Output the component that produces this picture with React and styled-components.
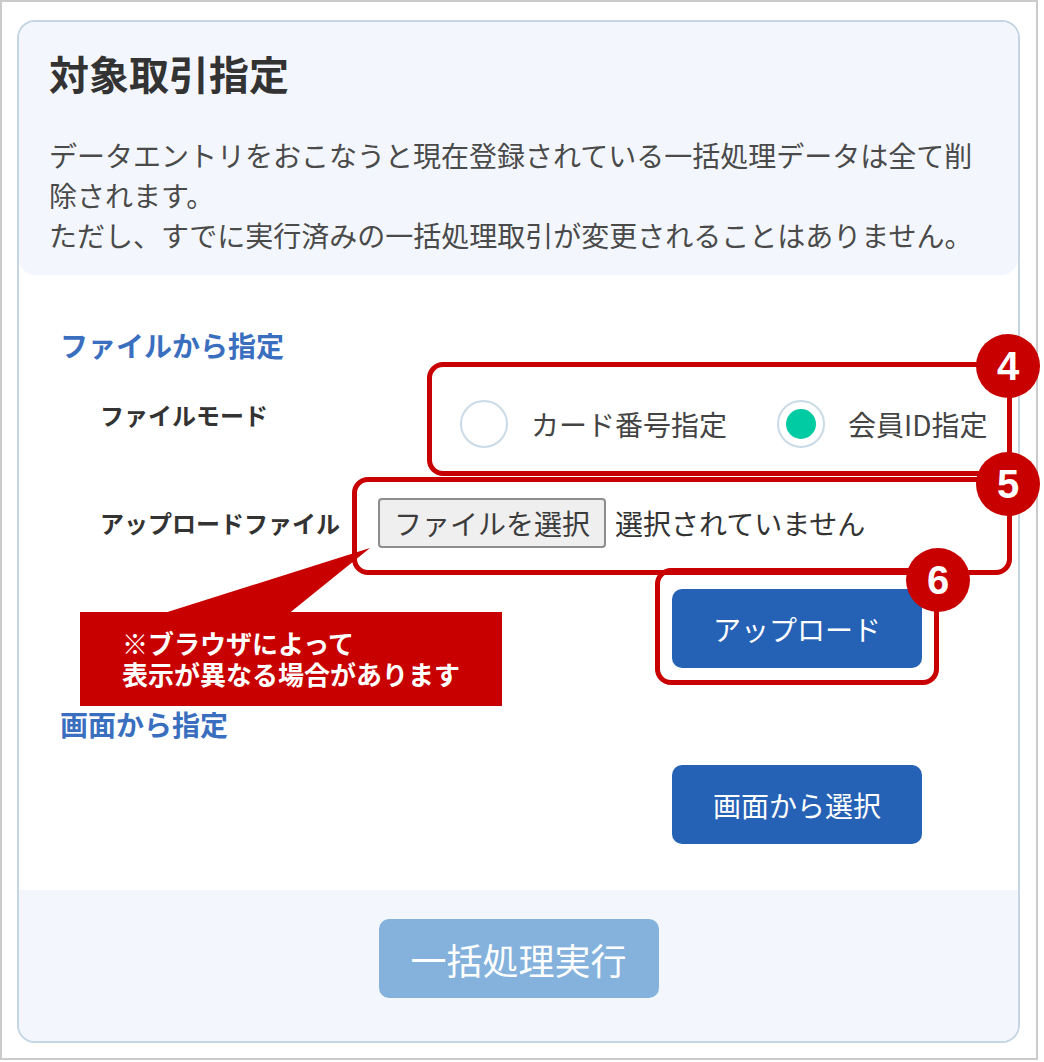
import React from 'react';
import styled, { createGlobalStyle } from 'styled-components';

const GlobalStyle = createGlobalStyle`
  html, body {
    margin: 0;
    padding: 0;
    background: #fff;
  }
  body {
    font-family: "Noto Sans CJK JP", "Noto Sans", sans-serif;
  }
`;

const RED = '#c80000';

const Frame = styled.div`
  position: relative;
  box-sizing: border-box;
  width: 1038px;
  height: 1060px;
  border: 2px solid #cbcbcb;
  padding: 18px 0 0 15px;
`;

const Card = styled.section`
  box-sizing: border-box;
  width: 1003px;
  border: 2px solid #c4d6e3;
  border-radius: 18px;
  overflow: hidden;
  background: #fff;
  display: flex;
  flex-direction: column;
`;

const Header = styled.header`
  background: #f3f7fd;
  border-radius: 0 0 16px 16px;
  padding: 31px 30px 20px 30px;
`;

const Title = styled.h2`
  margin: 0;
  font-size: 40px;
  line-height: 40px;
  font-weight: 700;
  color: #333;
`;

const Lead = styled.p`
  margin: 42px 0 0;
  font-size: 28px;
  line-height: 40px;
  color: #4a4a4a;
`;

const Body = styled.div`
  display: flex;
  flex-direction: column;
  padding: 52px 0 46px 41px;
`;

const SectionTitle = styled.h3`
  margin: ${p => p.$top || 0}px 0 0;
  font-size: 28px;
  line-height: 36px;
  font-weight: 700;
  color: #3a6fc0;
`;

const FieldRow = styled.div`
  display: grid;
  grid-template-columns: 278px auto;
  align-items: ${p => p.$align || 'center'};
  margin-top: ${p => p.$top}px;
  padding-left: 40px;
`;

const FieldLabel = styled.div`
  font-size: 24px;
  line-height: 30px;
  font-weight: 700;
  color: #333;
`;

const RadioGroup = styled.div`
  display: flex;
  align-items: center;
  gap: 50px;
  margin-left: 82px;
  height: 48px;
`;

const RadioOption = styled.label`
  display: flex;
  align-items: center;
  gap: 23px;
`;

const RadioCircle = styled.span`
  box-sizing: border-box;
  width: 48px;
  height: 48px;
  border: 2px solid #c9dbe7;
  border-radius: 50%;
  background: #fff;
  display: grid;
  place-items: center;

  &::after {
    content: '';
    width: 30px;
    height: 30px;
    border-radius: 50%;
    background: ${p => (p.$checked ? '#00cba3' : 'transparent')};
  }
`;

const RadioText = styled.span`
  font-size: 28px;
  line-height: 36px;
  color: #444;
`;

const FileControl = styled.div`
  display: flex;
  align-items: center;
`;

const FileButton = styled.button`
  box-sizing: border-box;
  height: 50px;
  padding: 0 14px;
  border: 2px solid #8d8d8d;
  border-radius: 4px;
  background: #efefef;
  font-family: inherit;
  font-size: 28px;
  line-height: 36px;
  color: #3c3c3c;
`;

const FileStatus = styled.span`
  margin-left: 9px;
  font-size: 28px;
  line-height: 36px;
  color: #333;
`;

const ActionRow = styled.div`
  display: flex;
  margin-top: ${p => p.$top}px;
  padding-left: 612px;
`;

const PrimaryButton = styled.button`
  box-sizing: border-box;
  width: 250px;
  height: 79px;
  border: none;
  border-radius: 10px;
  background: #2561b5;
  color: #fff;
  font-family: inherit;
  font-size: 28px;
  line-height: 36px;
`;

const Footer = styled.footer`
  display: flex;
  justify-content: center;
  background: #f3f7fd;
  padding: 29px 0 43px;
`;

const ExecButton = styled.button`
  box-sizing: border-box;
  width: 280px;
  height: 79px;
  border: none;
  border-radius: 10px;
  background: #84b2dd;
  color: #fff;
  font-family: inherit;
  font-size: 36px;
  line-height: 44px;
`;

/* annotation layer drawn over the screenshot */
const Marker = styled.div`
  position: absolute;
  box-sizing: border-box;
  left: ${p => p.$x}px;
  top: ${p => p.$y}px;
  width: ${p => p.$w}px;
  height: ${p => p.$h}px;
  border: 5px solid ${RED};
  border-radius: 16px;
  pointer-events: none;
`;

const Badge = styled.div`
  position: absolute;
  left: ${p => p.$x}px;
  top: ${p => p.$y}px;
  width: 64px;
  height: 64px;
  border-radius: 50%;
  background: ${RED};
  color: #fff;
  display: grid;
  place-items: center;
  font-family: "Liberation Sans", Arial, sans-serif;
  font-weight: 700;
  font-size: 40px;
  line-height: 1;
`;

const Callout = styled.div`
  position: absolute;
  left: 78px;
  top: 610px;
  box-sizing: border-box;
  width: 422px;
  height: 94px;
  padding: 15px 0 0 42px;
  background: ${RED};
  color: #fff;
  font-size: 26px;
  line-height: 31px;
  font-weight: 700;
`;

const Pointer = styled.svg`
  position: absolute;
  left: 150px;
  top: 540px;
`;

export default function App() {
  return (
    <>
      <GlobalStyle />
      <Frame>
        <Card>
          <Header>
            <Title>対象取引指定</Title>
            <Lead>
              データエントリをおこなうと現在登録されている一括処理データは全て削除されます。
              <br />
              ただし、すでに実行済みの一括処理取引が変更されることはありません。
            </Lead>
          </Header>

          <Body>
            <SectionTitle>ファイルから指定</SectionTitle>

            <FieldRow $top={37} $align="start">
              <FieldLabel>ファイルモード</FieldLabel>
              <RadioGroup>
                <RadioOption>
                  <RadioCircle />
                  <RadioText>カード番号指定</RadioText>
                </RadioOption>
                <RadioOption>
                  <RadioCircle $checked />
                  <RadioText>会員ID指定</RadioText>
                </RadioOption>
              </RadioGroup>
            </FieldRow>

            <FieldRow $top={50}>
              <FieldLabel>アップロードファイル</FieldLabel>
              <FileControl>
                <FileButton type="button">ファイルを選択</FileButton>
                <FileStatus>選択されていません</FileStatus>
              </FileControl>
            </FieldRow>

            <ActionRow $top={41}>
              <PrimaryButton type="button">アップロード</PrimaryButton>
            </ActionRow>

            <SectionTitle $top={38}>画面から指定</SectionTitle>

            <ActionRow $top={23}>
              <PrimaryButton type="button">画面から選択</PrimaryButton>
            </ActionRow>
          </Body>

          <Footer>
            <ExecButton type="button">一括処理実行</ExecButton>
          </Footer>
        </Card>

        <Marker $x={425} $y={360} $w={585} $h={114} />
        <Marker $x={350} $y={475} $w={660} $h={98} />
        <Marker $x={653} $y={566} $w={284} $h={117} />

        <Pointer width="225" height="75" viewBox="0 0 225 75">
          <polygon points="6,73 135,73 218,6" fill={RED} />
        </Pointer>
        <Callout>
          ※ブラウザによって
          <br />
          表示が異なる場合があります
        </Callout>

        <Badge $x={974} $y={332}>4</Badge>
        <Badge $x={974} $y={450}>5</Badge>
        <Badge $x={904} $y={546}>6</Badge>
      </Frame>
    </>
  );
}
